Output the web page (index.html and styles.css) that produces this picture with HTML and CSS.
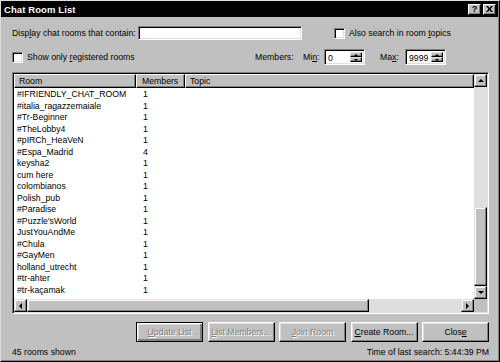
FILE: index.html
```html
<!DOCTYPE html>
<html>
<head>
<meta charset="utf-8">
<link rel="stylesheet" href="styles.css">
</head>
<body>
<div class="window">
  <div class="titlebar">
    <span class="title">Chat Room List</span>
    <div class="tbtns">
      <span class="tbtn help">?</span>
      <span class="tbtn close"><svg width="7" height="6" viewBox="0 0 7 6"><path d="M0 0h2l1.5 2 1.5-2h2L4.5 3 7 6H5L3.5 4 2 6H0l2.5-3z" fill="#000"/></svg></span>
    </div>
  </div>
  <div class="content">
    <div class="row1">
      <label class="lbl-filter">Disp<u>l</u>ay chat rooms that contain:</label>
      <div class="field filter"></div>
      <div class="check topics"><span class="box"></span><span>Also search in room <u>t</u>opics</span></div>
    </div>
    <div class="row2">
      <div class="check reg"><span class="box"></span><span>Show only <u>r</u>egistered rooms</span></div>
      <span class="lbl lbl-members">Members:</span>
      <span class="lbl lbl-min">Mi<u>n</u>:</span>
      <div class="field spin"><span class="val">0</span><div class="spinbtns"><span class="sb"><i class="tri up small"></i></span><span class="sb"><i class="tri down small"></i></span></div></div>
      <span class="lbl lbl-max">Ma<u>x</u>:</span>
      <div class="field spin"><span class="val">9999</span><div class="spinbtns"><span class="sb"><i class="tri up small"></i></span><span class="sb"><i class="tri down small"></i></span></div></div>
    </div>
    <div class="list">
      <div class="list-main">
        <div class="header">
          <div class="hcell h-room">Room</div>
          <div class="hcell h-mem">Members</div>
          <div class="hcell h-topic">Topic</div>
        </div>
        <div class="rows">
          <div class="item"><span class="c-room">#IFRIENDLY_CHAT_ROOM</span><span class="c-mem">1</span></div>
          <div class="item"><span class="c-room">#italia_ragazzemaiale</span><span class="c-mem">1</span></div>
          <div class="item"><span class="c-room">#Tr-Beginner</span><span class="c-mem">1</span></div>
          <div class="item"><span class="c-room">#TheLobby4</span><span class="c-mem">1</span></div>
          <div class="item"><span class="c-room">#pIRCh_HeaVeN</span><span class="c-mem">1</span></div>
          <div class="item"><span class="c-room">#Espa_Madrid</span><span class="c-mem">4</span></div>
          <div class="item"><span class="c-room">keysha2</span><span class="c-mem">1</span></div>
          <div class="item"><span class="c-room">cum here</span><span class="c-mem">1</span></div>
          <div class="item"><span class="c-room">colombianos</span><span class="c-mem">1</span></div>
          <div class="item"><span class="c-room">Polish_pub</span><span class="c-mem">1</span></div>
          <div class="item"><span class="c-room">#Paradise</span><span class="c-mem">1</span></div>
          <div class="item"><span class="c-room">#Puzzle'sWorld</span><span class="c-mem">1</span></div>
          <div class="item"><span class="c-room">JustYouAndMe</span><span class="c-mem">1</span></div>
          <div class="item"><span class="c-room">#Chula</span><span class="c-mem">1</span></div>
          <div class="item"><span class="c-room">#GayMen</span><span class="c-mem">1</span></div>
          <div class="item"><span class="c-room">holland_utrecht</span><span class="c-mem">1</span></div>
          <div class="item"><span class="c-room">#tr-ahter</span><span class="c-mem">1</span></div>
          <div class="item"><span class="c-room">#tr-kaçamak</span><span class="c-mem">1</span></div>
        </div>
      </div>
      <div class="vscroll">
        <span class="sbtn"><i class="tri up"></i></span>
        <div class="vtrack"><div class="vthumb"></div></div>
        <span class="sbtn"><i class="tri down"></i></span>
      </div>
      <div class="hscroll">
        <span class="sbtn"><i class="tri left"></i></span>
        <div class="hthumb"></div>
        <div class="htrack"></div>
        <span class="sbtn"><i class="tri right"></i></span>
      </div>
      <div class="corner"></div>
    </div>
    <div class="buttons">
      <span class="btn disabled default"><u>U</u>pdate List</span>
      <span class="btn disabled"><u>L</u>ist Members...</span>
      <span class="btn disabled"><u>J</u>oin Room</span>
      <span class="btn"><u>C</u>reate Room...</span>
      <span class="btn">Clos<u>e</u></span>
    </div>
    <div class="status">
      <span>45 rooms shown</span>
      <span>Time of last search: 5:44:39 PM</span>
    </div>
  </div>
</div>
</body>
</html>
```

FILE: styles.css
```css
* { box-sizing: border-box; }
html, body { margin: 0; padding: 0; background: #c0c0c0; }
body {
  font-family: "Liberation Sans", Arial, sans-serif;
  font-size: 8.7px;
  color: #000;
}
u { text-decoration: underline; text-underline-offset: 1px; }

.window {
  width: 500px;
  height: 362px;
  background: #c0c0c0;
  border: 1px solid;
  border-color: #dfdfdf #000 #000 #dfdfdf;
  box-shadow: inset -1px -1px #808080;
  display: flex;
  flex-direction: column;
}

.titlebar {
  height: 16px;
  background: #000;
  display: flex;
  align-items: center;
  justify-content: space-between;
  padding: 0 2px 0 3px;
  margin-right: 1px;
}
.title {
  color: #fff;
  font-weight: bold;
  font-size: 9.5px;
  letter-spacing: 0.1px;
}
.tbtns { display: flex; gap: 2px; }
.tbtn {
  width: 13px;
  height: 11px;
  background: #c0c0c0;
  border: 1px solid;
  border-color: #fff #000 #000 #fff;
  box-shadow: inset -1px -1px #808080;
  display: flex;
  align-items: center;
  justify-content: center;
  font-weight: bold;
  font-size: 9px;
  line-height: 1;
}
.tbtn svg { display: block; }

.content {
  flex: 1;
  display: flex;
  flex-direction: column;
  padding: 0 10px 0 11px;
}

.field {
  background: #fff;
  border: 1px solid;
  border-color: #808080 #fff #fff #808080;
  box-shadow: inset 1px 1px #000, inset -1px -1px #dfdfdf;
}

.row1 {
  margin-top: 9px;
  height: 14px;
  display: flex;
  align-items: center;
  white-space: nowrap;
}
.lbl-filter { flex: 0 0 126px; white-space: nowrap; }
.filter { width: 164px; height: 14px; }
.topics { margin-left: 32px; }

.check { display: flex; align-items: center; gap: 4px; white-space: nowrap; }
.box {
  flex: 0 0 11px;
  width: 11px;
  height: 11px;
  background: #fff;
  border: 1px solid;
  border-color: #808080 #fff #fff #808080;
  box-shadow: inset 1px 1px #000, inset -1px -1px #dfdfdf;
}

.row2 {
  margin-top: 9px;
  height: 16px;
  display: flex;
  align-items: center;
  white-space: nowrap;
}
.reg { flex: 0 0 243px; }
.lbl-members { flex: 0 0 48px; }
.lbl-min { flex: 0 0 21px; }
.lbl-max { flex: 0 0 25px; margin-left: 15px; }

.spin {
  width: 41px;
  height: 16px;
  display: flex;
  align-items: stretch;
  padding: 2px 2px 2px 3px;
}
.spin .val { flex: 1; line-height: 12px; }
.spinbtns { display: flex; flex-direction: column; width: 12px; }
.sb {
  flex: 1;
  background: #c0c0c0;
  border: 1px solid;
  border-color: #dfdfdf #000 #000 #dfdfdf;
  box-shadow: inset -1px -1px #808080;
  display: flex;
  align-items: center;
  justify-content: center;
}

.tri { display: block; width: 0; height: 0; border: solid transparent; }
.tri.up { border-width: 0 3px 3px 3px; border-bottom-color: #000; }
.tri.down { border-width: 3px 3px 0 3px; border-top-color: #000; }
.tri.left { border-width: 3px 3px 3px 0; border-right-color: #000; }
.tri.right { border-width: 3px 0 3px 3px; border-left-color: #000; }
.tri.small.up { border-width: 0 2px 2px 2px; }
.tri.small.down { border-width: 2px 2px 0 2px; }

.list {
  margin-top: 7px;
  height: 242px;
  background: #fff;
  border: 1px solid;
  border-color: #808080 #fff #fff #808080;
  box-shadow: inset 1px 1px #000, inset -1px -1px #dfdfdf;
  padding: 1px;
  display: grid;
  grid-template-columns: 1fr 13px;
  grid-template-rows: 1fr 13px;
}
.list-main { overflow: hidden; display: flex; flex-direction: column; }
.header { display: flex; height: 14px; flex: 0 0 14px; }
.hcell {
  background: #c0c0c0;
  border: 1px solid;
  border-color: #fff #000 #000 #fff;
  box-shadow: inset -1px -1px #808080;
  padding-left: 4px;
  line-height: 12px;
  white-space: nowrap;
}
.h-room { flex: 0 0 122px; }
.h-mem { flex: 0 0 49px; padding-left: 5px; }
.h-topic { flex: 1; padding-left: 4px; }

.rows { padding-top: 1px; }
.item { display: flex; height: 11.5px; line-height: 11.5px; white-space: nowrap; }
.c-room { flex: 0 0 122px; padding-left: 3px; }
.c-mem { padding-left: 7px; }

.sbtn {
  flex: 0 0 13px;
  width: 13px;
  height: 13px;
  background: #c0c0c0;
  border: 1px solid;
  border-color: #dfdfdf #000 #000 #dfdfdf;
  box-shadow: inset -1px -1px #808080, inset 1px 1px #fff;
  display: flex;
  align-items: center;
  justify-content: center;
}
.vscroll { display: flex; flex-direction: column; }
.vtrack { flex: 1; background: #dedede; display: flex; flex-direction: column; }
.vthumb {
  margin-top: auto;
  height: 79px;
  background: #c0c0c0;
  border: 1px solid;
  border-color: #dfdfdf #000 #000 #dfdfdf;
  box-shadow: inset -1px -1px #808080, inset 1px 1px #fff;
}
.hscroll { display: flex; }
.hthumb {
  flex: 0 0 342px;
  background: #c0c0c0;
  border: 1px solid;
  border-color: #dfdfdf #000 #000 #dfdfdf;
  box-shadow: inset -1px -1px #808080, inset 1px 1px #fff;
}
.htrack { flex: 1; background: #dedede; }
.corner { background: #c0c0c0; }

.buttons {
  margin-top: 8px;
  height: 20px;
  display: flex;
  justify-content: flex-end;
  gap: 4.5px;
}
.btn {
  width: 67px;
  height: 20px;
  background: #c0c0c0;
  border: 1px solid;
  border-color: #fff #000 #000 #fff;
  box-shadow: inset -1px -1px #808080, inset 1px 1px #dfdfdf;
  display: flex;
  align-items: center;
  justify-content: center;
  white-space: nowrap;
}
.btn.default {
  border-color: #000;
  box-shadow: inset 1px 1px #fff, inset -2px -2px #808080, inset 2px 2px #dfdfdf;
}
.btn.disabled { color: #808080; text-shadow: 1px 1px #fff; }

.status {
  margin-top: 4px;
  height: 12px;
  display: flex;
  justify-content: space-between;
  align-items: center;
  white-space: nowrap;
}
```
